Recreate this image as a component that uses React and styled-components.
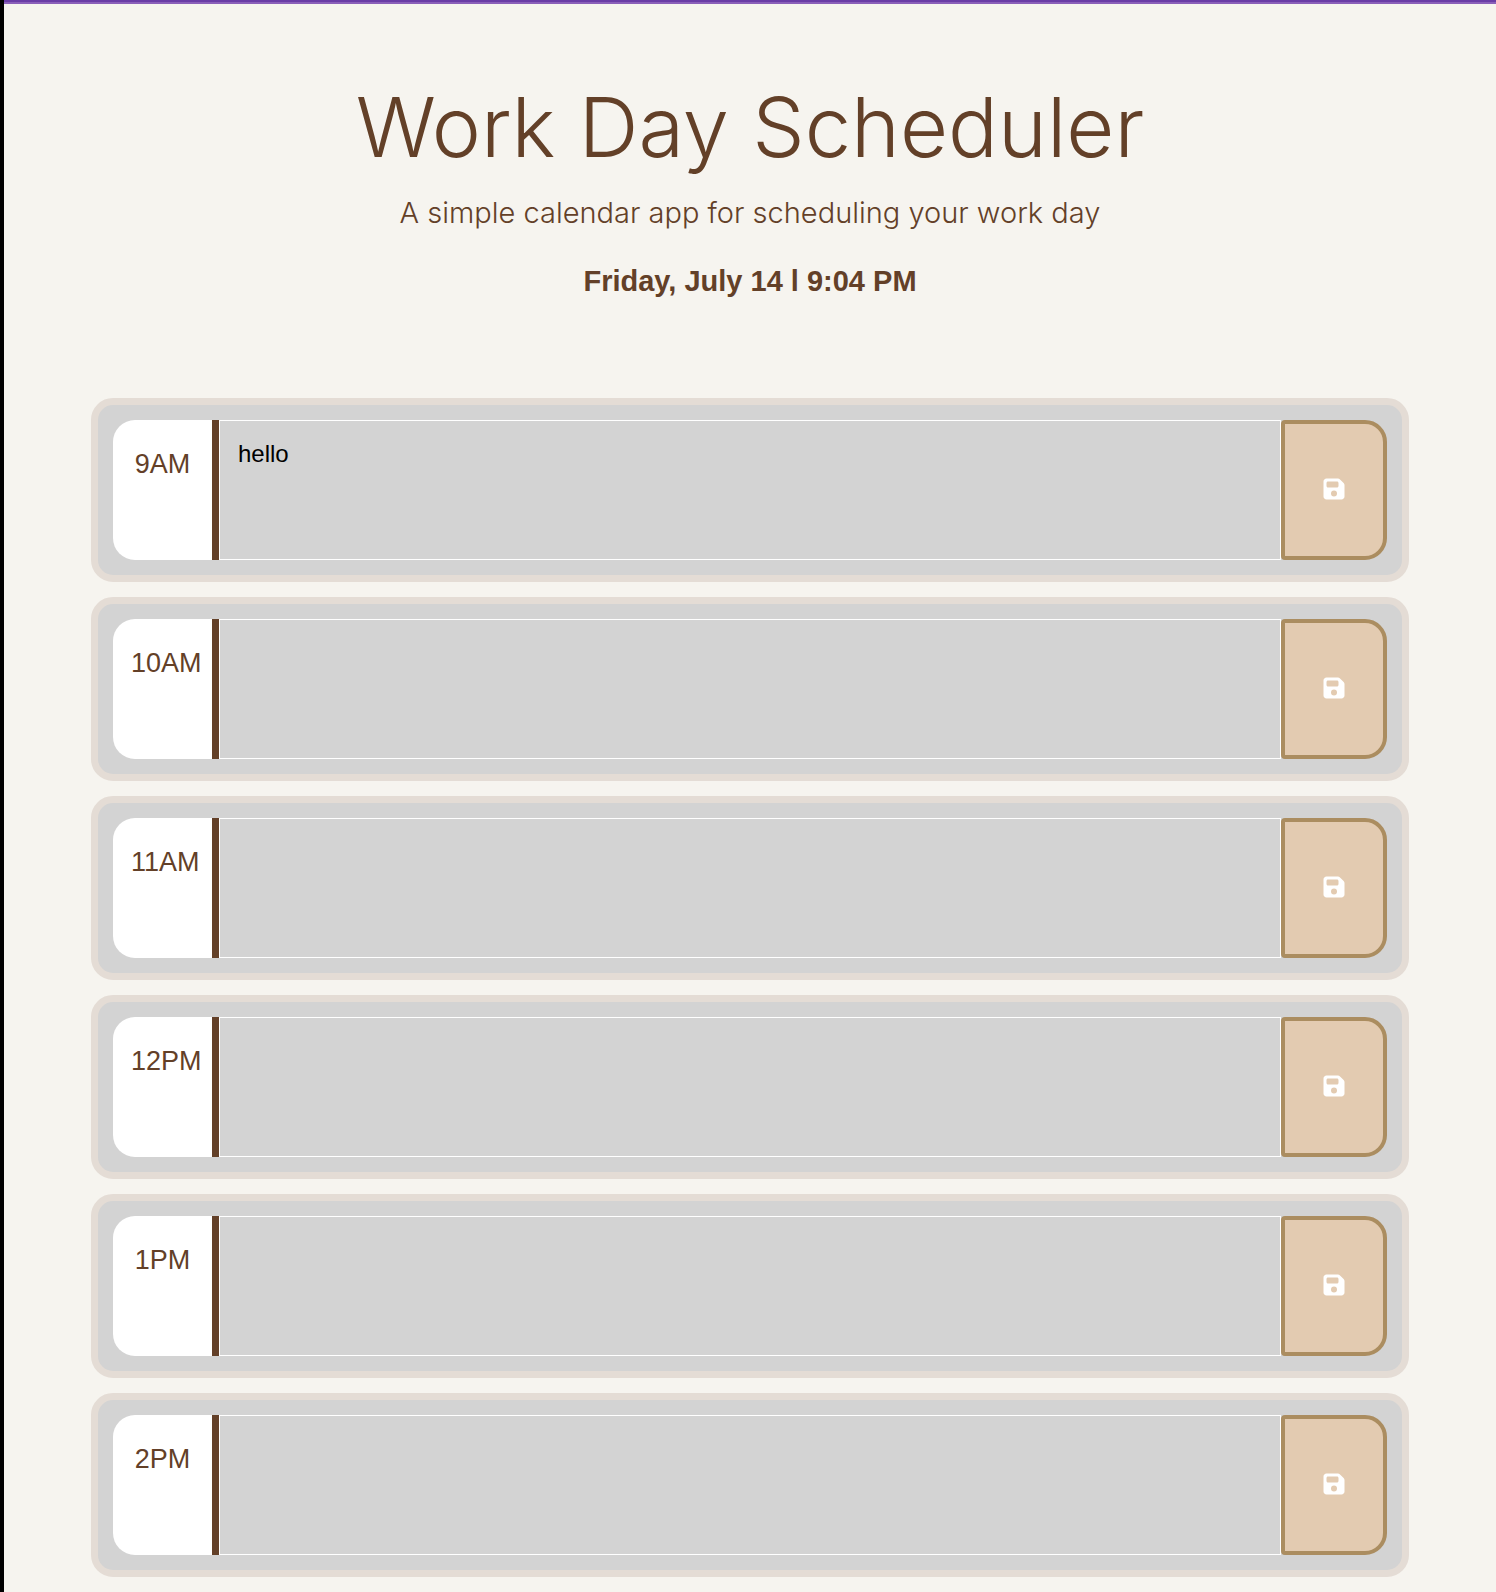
import React, { useState } from "react";
import styled, { createGlobalStyle } from "styled-components";
import { FaFloppyDisk } from "react-icons/fa6";

const GlobalStyle = createGlobalStyle`
  *, *::before, *::after { box-sizing: border-box; }
  body {
    margin: 0;
    background: #f6f4ef;
    font-family: "Liberation Sans", Arial, sans-serif;
  }
`;

const Page = styled.div`
  min-height: 100vh;
  border-left: 4px solid #000;
  background: #f6f4ef;
  color: #634028;
`;

const TopStripe = styled.div`
  height: 4px;
  background: #6a3da6;
  border-bottom: 2px solid #8a5fb9;
`;

const Header = styled.header`
  display: flex;
  flex-direction: column;
  align-items: center;
  padding: 70px 24px 93px;
  text-align: center;
`;

const Title = styled.h1`
  margin: 0;
  font-family: Inter, "Liberation Sans", sans-serif;
  font-size: 83px;
  font-weight: 300;
  line-height: 106px;
`;

const Lead = styled.p`
  margin: 9px 0 0;
  font-family: Inter, "Liberation Sans", sans-serif;
  font-size: 29px;
  font-weight: 300;
  line-height: 48px;
`;

const CurrentDay = styled.p`
  margin: 20px 0 0;
  font-size: 29px;
  font-weight: 700;
  line-height: 48px;
`;

const Schedule = styled.main`
  display: flex;
  flex-direction: column;
  gap: 15px;
  padding: 0 87px 15px;
`;

const TimeBlock = styled.section`
  display: flex;
  padding: 15px;
  border: 7px solid #e4dcd5;
  border-radius: 22px;
  background: #d3d3d3;
`;

const Hour = styled.label`
  flex: none;
  width: 106px;
  padding: 28px 18px;
  border-right: 7px solid #634028;
  border-radius: 22px 0 0 22px;
  background: #fff;
  font-size: 27px;
  line-height: 32px;
  text-align: center;
  white-space: nowrap;
`;

const Description = styled.textarea`
  flex: 1;
  min-width: 0;
  height: 140px;
  margin: 0;
  padding: 18px;
  border: 1px solid #fff;
  border-radius: 0;
  outline: none;
  resize: none;
  background: transparent;
  color: #000;
  font-family: inherit;
  font-size: 24px;
  line-height: 30px;
`;

const SaveButton = styled.button`
  display: flex;
  flex: none;
  align-items: center;
  justify-content: center;
  width: 106px;
  padding: 0 0 2px;
  border: 4px solid #ab8d60;
  border-radius: 4px 22px 22px 4px;
  background: #e3cbb1;
  color: #fff;
  font-size: 24px;
  cursor: pointer;
`;

const HOURS = ["9AM", "10AM", "11AM", "12PM", "1PM", "2PM"];

export default function App() {
  const [entries, setEntries] = useState({ "9AM": "hello" });

  return (
    <Page>
      <GlobalStyle />
      <TopStripe />
      <Header>
        <Title>Work Day Scheduler</Title>
        <Lead>A simple calendar app for scheduling your work day</Lead>
        <CurrentDay>Friday, July 14 l 9:04 PM</CurrentDay>
      </Header>
      <Schedule>
        {HOURS.map((hour) => (
          <TimeBlock key={hour}>
            <Hour htmlFor={`hour-${hour}`}>{hour}</Hour>
            <Description
              id={`hour-${hour}`}
              value={entries[hour] || ""}
              onChange={(e) => setEntries({ ...entries, [hour]: e.target.value })}
            />
            <SaveButton type="button" aria-label="save">
              <FaFloppyDisk aria-hidden="true" />
            </SaveButton>
          </TimeBlock>
        ))}
      </Schedule>
    </Page>
  );
}
